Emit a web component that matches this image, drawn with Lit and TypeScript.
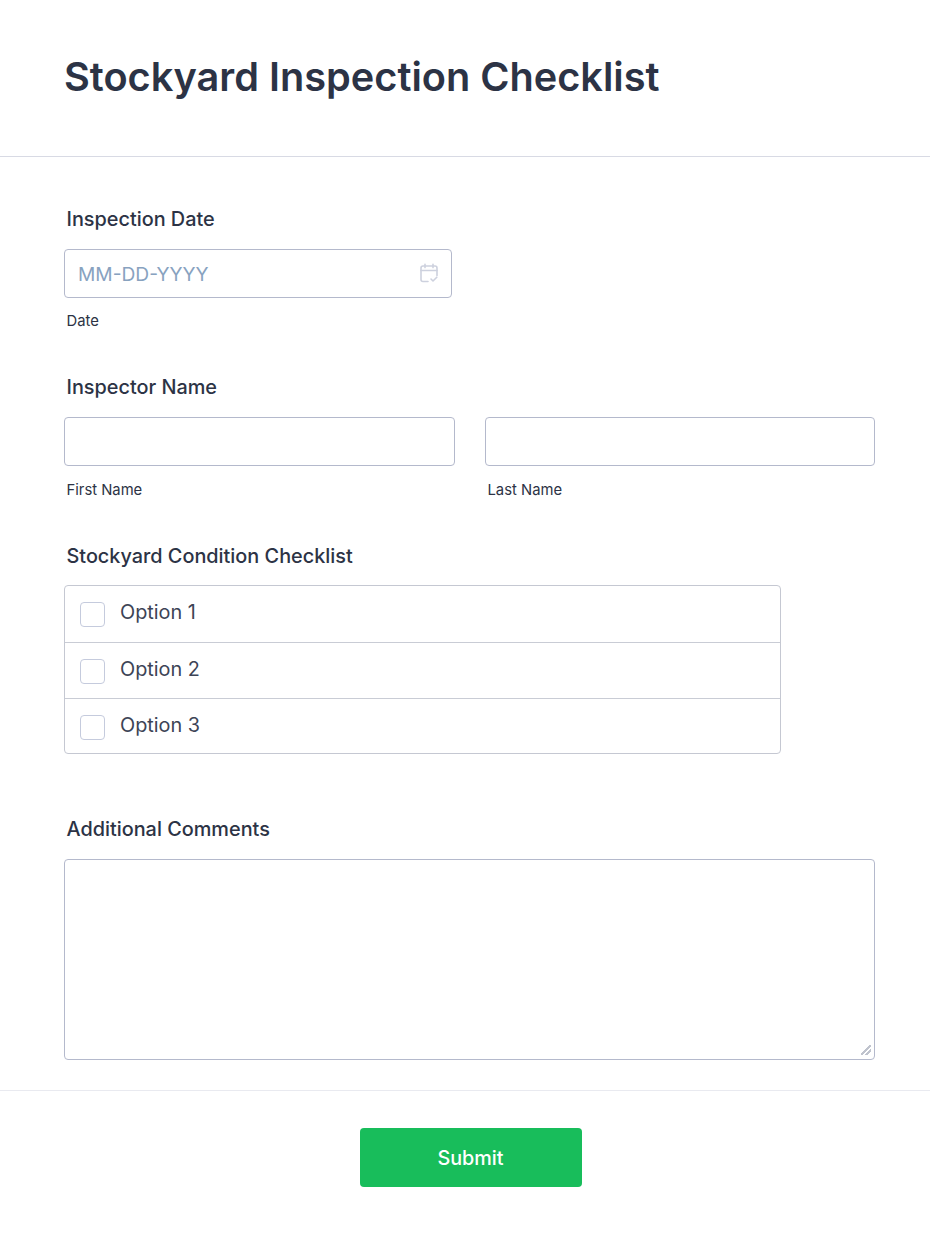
import { LitElement, html, css } from "lit";
import { customElement } from "lit/decorators.js";

@customElement("app-root")
export class AppRoot extends LitElement {
  static styles = css`
    :host {
      display: block;
      background: #fff;
      color: #2c3345;
      font-family: Inter, "Liberation Sans", sans-serif;
      min-height: 1237px;
    }
    * {
      box-sizing: border-box;
    }
    .header {
      height: 157px;
      padding: 52px 64px 0;
      border-bottom: 1px solid #d8dae4;
    }
    h1 {
      margin: 0;
      font-size: 39.7px;
      line-height: 50px;
      font-weight: 600;
    }
    .form {
      padding: 50px 55px 0 64px;
    }
    .label {
      display: block;
      height: 24px;
      margin: 0 0 18px 2.5px;
      font-size: 19.85px;
      line-height: 25px;
      font-weight: 500;
    }
    .field {
      margin-bottom: 44px;
    }
    input,
    textarea {
      display: block;
      width: 100%;
      margin: 0;
      background: #fff;
      border: 1px solid #b4b9cc;
      border-radius: 4px;
      outline: none;
      font: inherit;
      color: inherit;
    }
    input {
      height: 49px;
      padding: 1px 13px 0;
      font-size: 19.2px;
    }
    input::placeholder {
      color: #88a2bf;
      opacity: 1;
    }
    textarea {
      height: 201px;
      resize: vertical;
    }
    textarea::-webkit-resizer {
      background: linear-gradient(
          135deg,
          transparent 44%,
          #bfc3cd 44%,
          #bfc3cd 57%,
          transparent 57%,
          transparent 68%,
          #bfc3cd 68%,
          #bfc3cd 81%,
          transparent 81%
        )
        2px 1px / 10px 10px no-repeat;
    }
    .date {
      position: relative;
      width: 388px;
    }
    .date svg {
      position: absolute;
      top: 14px;
      right: 13px;
    }
    .sub {
      display: block;
      height: 20px;
      margin: 13px 0 0 2.5px;
      font-size: 14.8px;
      line-height: 20px;
    }
    .names {
      display: grid;
      grid-template-columns: 391px 390px;
      column-gap: 30px;
    }
    .names .sub {
      margin-top: 14px;
    }
    .checklist {
      width: 717px;
      height: 169px;
      margin: -1px 0 63px;
      border: 1px solid #c5c8d2;
      border-radius: 4px;
    }
    .option {
      display: flex;
      align-items: center;
      height: 56px;
      padding: 2px 0 0 15px;
      font-size: 19.85px;
      color: #3d4456;
      border-bottom: 1px solid #c9ccd5;
    }
    .option:first-child {
      height: 57px;
      padding-top: 1px;
    }
    .option:last-child {
      height: 55px;
      border-bottom: none;
    }
    .box {
      width: 25px;
      height: 25px;
      margin-right: 15px;
      border: 1px solid #c5cbdd;
      border-radius: 4px;
    }
    .option span {
      position: relative;
      top: -3px;
    }
    .comments {
      margin-bottom: 30px;
    }
    .footer {
      display: flex;
      justify-content: center;
      height: 147px;
      padding: 37px 0 0 11px;
      border-top: 1px solid #e9eaf0;
    }
    button {
      width: 222px;
      height: 59px;
      padding: 0;
      border: none;
      border-radius: 4px;
      background: #18bd5b;
      color: #fff;
      font: inherit;
      font-size: 19.8px;
      font-weight: 500;
    }
  `;

  render() {
    return html`
      <div class="header"><h1>Stockyard Inspection Checklist</h1></div>
      <div class="form">
        <div class="field">
          <label class="label">Inspection Date</label>
          <div class="date">
            <input placeholder="MM-DD-YYYY" />
            <svg width="20" height="20" viewBox="0 0 20 20" fill="none" stroke="#cdd1de" stroke-width="1.6" stroke-linecap="round" stroke-linejoin="round">
              <path d="M9 18.5H4a2 2 0 0 1-2-2V5a2 2 0 0 1 2-2h12a2 2 0 0 1 2 2v7.5" />
              <path d="M2 7.5h16M6 1.2v3.4M14 1.2v3.4" />
              <path d="M12 16l2 2 3.8-3.8" />
            </svg>
          </div>
          <span class="sub">Date</span>
        </div>
        <div class="field">
          <label class="label">Inspector Name</label>
          <div class="names">
            <div><input /><span class="sub">First Name</span></div>
            <div><input /><span class="sub">Last Name</span></div>
          </div>
        </div>
        <label class="label">Stockyard Condition Checklist</label>
        <div class="checklist">
          ${["Option 1", "Option 2", "Option 3"].map(
            (o) => html`<div class="option"><div class="box"></div><span>${o}</span></div>`
          )}
        </div>
        <div class="comments">
          <label class="label">Additional Comments</label>
          <textarea></textarea>
        </div>
      </div>
      <div class="footer"><button>Submit</button></div>
    `;
  }
}
